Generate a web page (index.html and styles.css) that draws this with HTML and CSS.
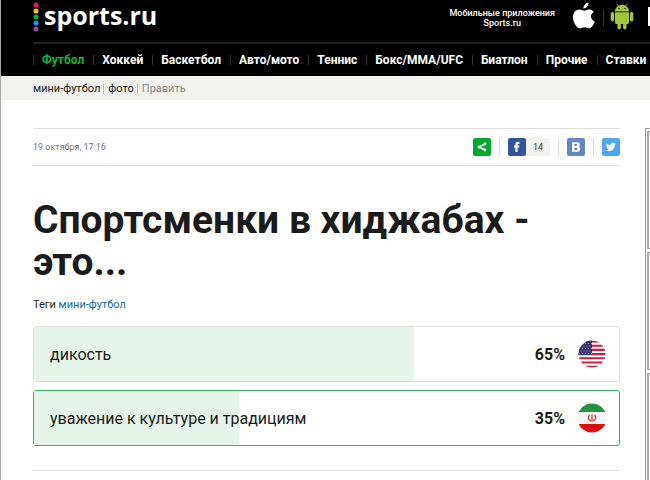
FILE: index.html
```html
<!DOCTYPE html>
<html lang="ru">
  <head>
    <meta charset="UTF-8">
    <title>Спортсменки в хиджабах - это...</title>
    <link rel="stylesheet" href="styles.css">
  </head>
  <body>
    <svg width="0" height="0" class="sprite">
      <symbol id="share" viewBox="0 0 18 18">
        <path d="M12 6L6 9l6 3" fill="none" stroke="#fff" stroke-width="1.4"/>
        <circle cx="12" cy="6" r="1.4" fill="#fff"/>
        <circle cx="6.2" cy="9" r="1.6" fill="#fff"/>
        <circle cx="12" cy="12" r="1.4" fill="#fff"/>
      </symbol>
      <symbol id="facebook" viewBox="0 0 18 18">
        <path d="M7.400 14V9.600H6V7.400h1.400V6.200C7.400 4.500 8.300 3.800 9.900 3.800h1.500v2.100h-1c-.6 0-.8.3-.8.8v.7h1.800l-.3 2.200H9.600V14z" fill="#fff"/>
      </symbol>
      <symbol id="vk" viewBox="0 0 18 18">
        <path fill-rule="evenodd" d="M5 4.200h4.600c2 0 3.200.8 3.200 2.500 0 1-.5 1.600-1.300 2 1.100.3 1.800 1 1.800 2.300 0 1.900-1.400 2.800-3.500 2.800H5zM7.400 6.100v1.900h1.500c.8 0 1.200-.3 1.200-1s-.4-.9-1.200-.9zM7.400 9.800v2.100h1.700c.9 0 1.400-.3 1.400-1s-.5-1.100-1.400-1.100z" fill="#fff"/>
      </symbol>
      <symbol id="twitter" viewBox="0 0 18 18">
        <path d="M14 5.700c-.4.200-.8.300-1.200.3.400-.2.700-.6.900-1.100-.4.200-.8.400-1.300.5a2.100 2.100 0 0 0-3.600 1.900c-1.700-.1-3.300-.9-4.300-2.200-.6 1-.3 2.200.6 2.800-.3 0-.6-.1-.9-.2 0 1 .7 1.900 1.600 2.100-.3.100-.6.100-.9 0 .3.800 1 1.400 1.900 1.400-.9.700-2 1-3.100.9 3.900 2.400 9.200.1 9.200-5.100.4-.4.800-.8 1.100-1.300z" fill="#fff"/>
      </symbol>
    </svg>

    <header class="header">
      <div class="header-top">
        <a class="logo" href="#">
          <svg width="6" height="30" viewBox="0 0 6 30">
            <circle cx="3" cy="3" r="2.500" fill="#f4154b"/>
            <circle cx="3" cy="9" r="2.500" fill="#fdc500"/>
            <circle cx="3" cy="15" r="2.500" fill="#07b53b"/>
            <circle cx="3" cy="21" r="2.500" fill="#169bf0"/>
            <circle cx="3" cy="27" r="2.500" fill="#9b48a6"/>
          </svg>
          <span>sports.ru</span>
        </a>
        <div class="apps">
          <p>Мобильные приложения<br>Sports.ru</p>
          <a href="#" aria-label="App Store">
            <svg width="24" height="28" viewBox="0 0 24 28">
              <path d="M16.500.5c.2 2.900-2 5.900-5 6C11.300 3.600 13.600 1 16.500.5zM21.800 10c-4.200 2.400-3.500 7.800 1 9.400-.7 2.200-2.900 6.300-5.200 6.800-2 .2-2.800-1-5-1s-3 1.200-4.800 1.100C4.700 26 1 20.500 1 15.300 1 10.400 4 7.600 7.400 7.500c2 0 3.600 1.300 4.800 1.300 1.200 0 3-1.500 5.400-1.300 1.800.1 3.200.9 4.200 2.500z" fill="#fff"/>
            </svg>
          </a>
          <a href="#" aria-label="Google Play">
            <svg width="24" height="28" viewBox="0 0 24 28">
              <g fill="#a4c639">
                <path d="M5 9.500C5 5.500 8 3 12 3s7 2.500 7 6.500z"/>
                <path d="M8.500 4L6.800 1.500M15.500 4l1.700-2.500" stroke="#a4c639" stroke-width=".8"/>
                <path d="M5 10.300h14v10.200c0 .8-.7 1.500-1.500 1.500h-11c-.8 0-1.500-.7-1.500-1.500z"/>
                <rect x=".7" y="10" width="3.400" height="9.500" rx="1.700"/>
                <rect x="19.900" y="10" width="3.400" height="9.500" rx="1.700"/>
                <rect x="7.500" y="19" width="3.400" height="8.500" rx="1.700"/>
                <rect x="13.100" y="19" width="3.400" height="8.500" rx="1.700"/>
              </g>
              <circle cx="9" cy="6.500" r=".7"/>
              <circle cx="15" cy="6.500" r=".7"/>
            </svg>
          </a>
          <a href="#" aria-label="Windows Store">
            <svg width="24" height="28" viewBox="0 0 24 28">
              <path d="M0 5h22v19H0z" fill="#fff"/>
            </svg>
          </a>
        </div>
      </div>
      <nav class="menu">
        <a class="active" href="#">Футбол</a>
        <a href="#">Хоккей</a>
        <a href="#">Баскетбол</a>
        <a href="#">Авто/мото</a>
        <a href="#">Теннис</a>
        <a href="#">Бокс/MMA/UFC</a>
        <a href="#">Биатлон</a>
        <a href="#">Прочие</a>
        <a href="#">Ставки</a>
      </nav>
    </header>
    <nav class="submenu">
      <a href="#">мини-футбол</a>
      <a href="#">фото</a>
      <a class="edit" href="#">Править</a>
    </nav>

    <div class="content">
      <main class="article">
        <div class="share-bar">
          <time>19 октября, 17:16</time>
          <div class="share">
            <button class="share-btn common" aria-label="Поделиться"><svg><use href="#share"/></svg></button>
            <button class="share-btn fb" aria-label="Facebook"><svg><use href="#facebook"/></svg><span>14</span></button>
            <button class="share-btn vk" aria-label="ВКонтакте"><svg><use href="#vk"/></svg></button>
            <button class="share-btn tw" aria-label="Twitter"><svg><use href="#twitter"/></svg></button>
          </div>
        </div>
        <h1>Спортсменки в хиджабах - это...</h1>
        <p class="tags">Теги <a href="#">мини-футбол</a></p>
        <div class="poll">
          <div class="option">
            <div class="bar" style="width: 65%"></div>
            <span class="name">дикость</span>
            <span class="percent">65%</span>
            <svg class="flag" viewBox="0 0 30 30">
              <clipPath id="us"><circle cx="15" cy="15" r="13.500"/></clipPath>
              <g clip-path="url(#us)">
                <path d="M0 0h30v30H0z" fill="#fff"/>
                <path d="M0 2.500h30M0 6.700h30M0 10.900h30M0 15.100h30M0 19.300h30M0 23.500h30M0 27.700h30" stroke="#c8203c" stroke-width="2.100"/>
                <path d="M0 0h15v16H0z" fill="#34356e"/>
                <path d="M2 4.500h13M2 9.500h13M2 14.500h13" stroke="#a5a5c6" stroke-dasharray="1 2"/>
                <path d="M3.500 7h11M3.500 12h11" stroke="#a5a5c6" stroke-dasharray="1 2"/>
              </g>
            </svg>
          </div>
          <div class="option selected">
            <div class="bar" style="width: 35%"></div>
            <span class="name">уважение к культуре и традициям</span>
            <span class="percent">35%</span>
            <svg class="flag" viewBox="0 0 30 30">
              <clipPath id="ir"><circle cx="15" cy="15" r="14.500"/></clipPath>
              <g clip-path="url(#ir)">
                <path d="M0 0h30v30H0z" fill="#f5f5f5"/>
                <path d="M0 0h30v9H0z" fill="#239342"/>
                <path d="M0 21h30v9H0z" fill="#d8100f"/>
                <path d="M0 9.500h30M0 20.500h30" stroke="#fff" stroke-dasharray="1 1"/>
                <path d="M12.500 12c-2 2-1.500 5 1.500 5.800M17.500 12c2 2 1.500 5-1.500 5.800M15 11.500v7" fill="none" stroke="#e0292c" stroke-width="1.200"/>
              </g>
            </svg>
          </div>
        </div>
        <div class="share-bar">
          <div class="share">
            <button class="share-btn common" aria-label="Поделиться"><svg><use href="#share"/></svg></button>
            <button class="share-btn fb" aria-label="Facebook"><svg><use href="#facebook"/></svg><span>14</span></button>
            <button class="share-btn vk" aria-label="ВКонтакте"><svg><use href="#vk"/></svg></button>
            <button class="share-btn tw" aria-label="Twitter"><svg><use href="#twitter"/></svg></button>
          </div>
        </div>
      </main>
      <aside class="sidebar">
        <div class="banner"></div>
        <div class="banner"></div>
        <div class="banner"></div>
      </aside>
    </div>
  </body>
</html>
```
FILE: styles.css
```css
* {
  box-sizing: border-box;
}
html {
  overflow: hidden;
}
body {
  margin: 0;
  border-left: 1px solid #a9a9a9;
  font-family: Roboto, "Liberation Sans", sans-serif;
  font-size: 11px;
  color: #1b1b1b;
  background: #fff;
}
a {
  color: inherit;
  text-decoration: none;
}
p {
  margin: 0;
}
.sprite {
  position: absolute;
}

.header {
  height: 76px;
  padding-left: 32px;
  background: #000;
  color: #fff;
  white-space: nowrap;
  overflow: hidden;
}
.header-top {
  display: flex;
  justify-content: space-between;
  height: 44px;
  padding-top: 2px;
  border-bottom: 2px solid #222;
}
.logo {
  display: flex;
  gap: 5px;
  font: bold 25px/26px "Open Sans", sans-serif;
}
.apps {
  display: flex;
  margin-right: -29px;
}
.apps p {
  margin-right: 10px;
  padding-top: 6px;
  font-size: 9px;
  font-weight: 500;
  line-height: 10px;
  text-align: center;
}
.apps a {
  height: 28px;
  padding: 0 7px;
}
.apps a:nth-of-type(2) {
  background: linear-gradient(#333, #333) 0 8px / 1px 17px no-repeat;
}
.menu {
  display: flex;
  padding-top: 11px;
  font-size: 12px;
  font-weight: bold;
  line-height: 10px;
}
.menu a {
  padding: 0 9px 0 8px;
  border-left: 1px solid #333;
}
.menu .active {
  color: #07b53b;
}

.submenu {
  display: flex;
  height: 24px;
  padding: 8px 0 6px 32px;
  background: #f2f2ee;
  line-height: 10px;
}
.submenu a + a {
  margin-left: 3px;
  padding-left: 4px;
  border-left: 1px solid #bbb;
}
.submenu .edit {
  color: #888;
}

.content {
  display: flex;
  gap: 25px;
  padding: 28px 0 0 32px;
}
.article {
  flex: 1;
}
.share-bar {
  display: flex;
  align-items: center;
  height: 38px;
  border: 1px solid #ddd;
  border-width: 1px 0;
}
.share-bar time {
  font-size: 9px;
  color: #777;
}
.share {
  display: flex;
  margin-left: auto;
}
.share-btn {
  display: flex;
  height: 18px;
  margin: 0;
  padding: 0 8px;
  border: 0;
  background: none;
  font: 9px/18px Roboto, sans-serif;
  color: #333;
}
.share-btn:last-child {
  padding-right: 0;
}
.share-btn + .share-btn {
  border-left: 1px solid #ddd;
}
.share-btn svg {
  width: 18px;
  height: 18px;
  border-radius: 2px;
}
.share-btn span {
  width: 24px;
  background: #f2f2ee;
  border-radius: 0 2px 2px 0;
}
.common svg {
  background: #00a82d;
}
.fb svg {
  background: #35549b;
}
.vk svg {
  background: #6288bf;
}
.tw svg {
  background: #4da7ea;
}

h1 {
  margin: 33px 0 0;
  font-size: 39px;
  line-height: 42px;
}
.tags {
  margin-top: 16px;
  font-size: 11px;
  line-height: 12px;
}
.tags a {
  color: #1669a0;
}

.poll {
  display: grid;
  gap: 8px;
  margin: 15px 0 24px;
}
.option {
  position: relative;
  display: flex;
  align-items: center;
  height: 56px;
  padding: 0 12px 0 16px;
  border: 1px solid #ddd;
  border-radius: 3px;
  font-size: 16px;
}
.option.selected {
  border-color: #35b95c;
}
/* result bar behind the answer */
.bar {
  position: absolute;
  top: 0;
  bottom: 0;
  left: 0;
  background: #e6f5ea;
}
.name {
  position: relative;
  flex: 1;
}
.percent {
  font-weight: bold;
}
.flag {
  width: 30px;
  height: 30px;
  margin-left: 12px;
}

.sidebar {
  flex: 0 0 240px;
  margin-right: -235px;
  padding: 2px 1px;
  border: 1px solid #999;
}
.banner {
  height: 118px;
  margin-bottom: 3px;
  border: 1px solid #999;
  border-left: 2px solid #aaa;
}
```
